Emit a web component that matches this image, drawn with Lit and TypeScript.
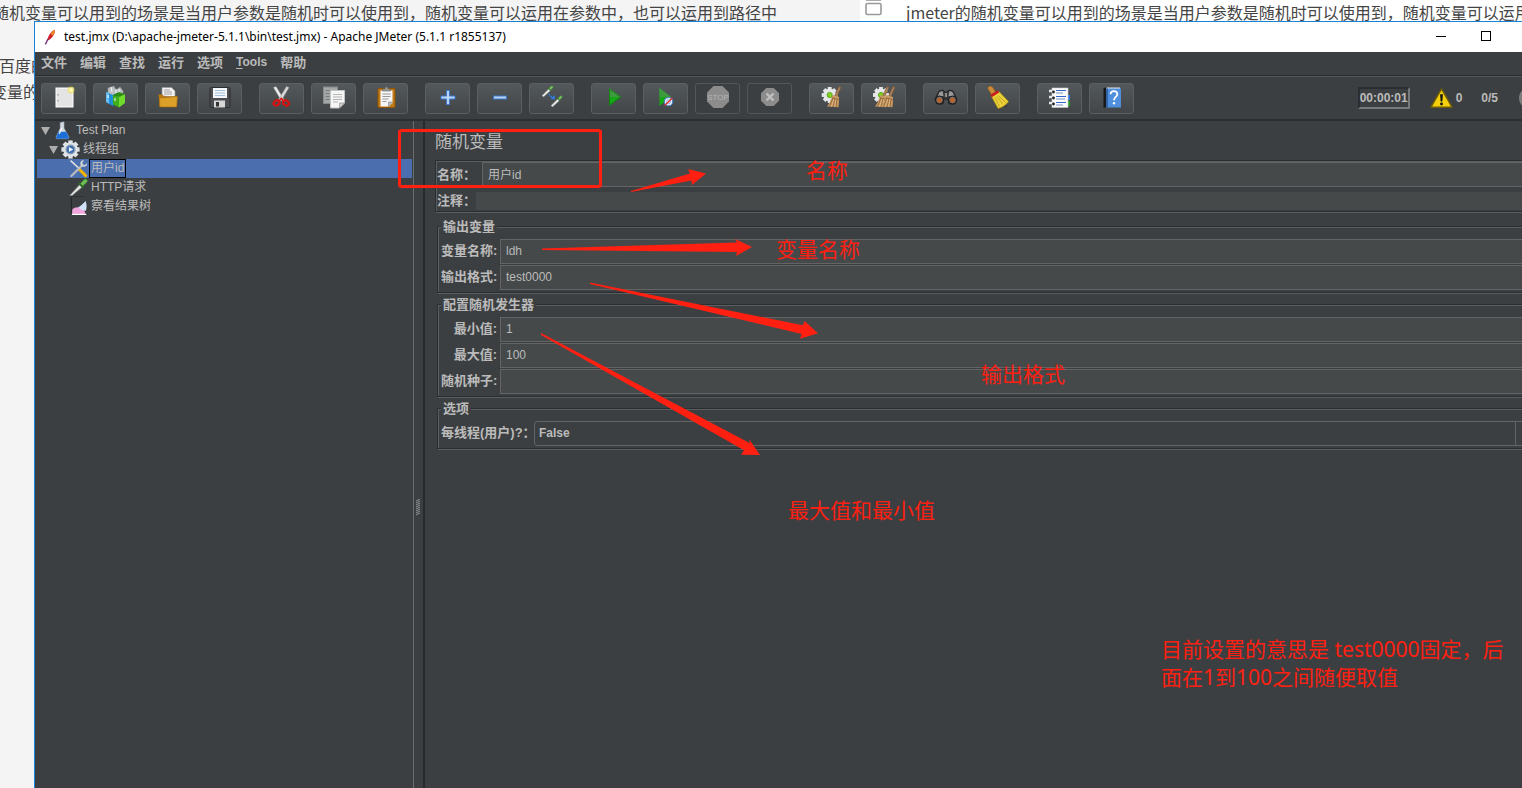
import { LitElement, html, svg, css } from "lit";
import { customElement, property, state } from "lit/decorators.js";
import { classMap } from "lit/directives/class-map.js";

const gear = (cx: number, cy: number, r: number, fill: string) => svg`
  <g fill=${fill}>
    <circle cx=${cx} cy=${cy} r=${r * 0.8}></circle>
    ${[0, 45, 90, 135].map(
      (a) => svg`<rect x=${cx - r * 0.24} y=${cy - r} width=${r * 0.48} height=${r * 2}
        transform=${`rotate(${a} ${cx} ${cy})`}></rect>`
    )}
  </g>`;

const broom = (dx: number) => svg`
  <g transform=${`translate(${dx} 0)`}>
    <path d="M19 0.5l2 0.8-4 9.2-2.4-0.8z" fill="#a98058" stroke="#7a5636" stroke-width=".5"></path>
    <path d="M12.5 9l6.5 2c0 4 0 7-0.6 10.2L7 20.500c2.500-3 4-7 5.500-11.500z" fill="#c79a62"></path>
    <path d="M13 12l-3.500 8.500M15 12l-2 9M17 12.500l-1 8.500M11.800 11.800l7 2" stroke="#8a5e34" stroke-width=".8" fill="none"></path>
    <path d="M14 13l-2.500 7.500M16 13l-1.500 8" stroke="#e9c694" stroke-width=".6" fill="none"></path>
  </g>`;

const pipette = (t: string) => svg`
  <g transform=${t}>
    <path d="M1 12L9 4l1.800 1.800L3 13z" fill="#eef0ee" stroke="#8d938d" stroke-width=".6"></path>
    <path d="M7.800 3.200l3 3" stroke="#2d6b22" stroke-width="1.200"></path>
    <path d="M9 3.600L11.500 1c1-.8 2.600.5 1.800 1.800L10.800 5.500z" fill="#7cc465" stroke="#3f8a30" stroke-width=".6"></path>
  </g>`;

const pics: Record<string, unknown> = {
  new: svg`
    <rect x="4" y="2" width="17" height="19" fill="#e4e4e4" stroke="#fff"></rect>
    <path d="M6 8v1.500M6 14v1.500" stroke="#888"></path>
    <circle cx="19" cy="4" r="3.500" fill="#f2e24a" opacity=".6"></circle>
    <circle cx="19" cy="4" r="1.800" fill="#fffbb8"></circle>`,
  templates: svg`
    <path d="M4 2l6-2 2 4 4-3 3 4v4l-8 4-7-4z" fill="#b9bfc2" stroke="#8a9194" stroke-width=".6"></path>
    <path d="M7 1l1 5M12 3l0 5M15 3l0 5" stroke="#f4f4f4"></path>
    <path d="M2 6l7 3v11l-7-4z" fill="#1f8fd8"></path><path d="M2 6l3 1.200v10.500L2 16z" fill="#63bdf2"></path>
    <path d="M9 9l4-2v11l-4 2z" fill="#1266a3"></path>
    <path d="M9 9l6 2v10.500l-6-3z" fill="#3fae1b"></path><path d="M15 11l6-3v9l-6 4.500z" fill="#6fdc2c"></path>
    <path d="M9 9l6-3 6 2-6 3z" fill="#2c8d10"></path>
    <path d="M4 9v3M11 12v3" stroke="#fff"></path>`,
  open: svg`
    <path d="M6 10V1.500h9.500L19 5v6z" fill="#f2f2f2" stroke="#999" stroke-width=".7"></path>
    <path d="M8 4h6M8 6h8M8 8h8" stroke="#999" stroke-width=".9"></path>
    <path d="M2.500 8.500h4l1.500 2h13v10.500H3.500z" fill="#b9790c"></path>
    <path d="M3.500 12l18-1.500-1 10.500H3.800z" fill="#dc9f28" stroke="#a86a06" stroke-width=".6"></path>`,
  save: svg`
    <rect x="2" y="1.500" width="20" height="20" rx="1.500" fill="#4b4d50" stroke="#2b2c2e"></rect>
    <rect x="5" y="2" width="14" height="10" fill="#f3f7fb"></rect>
    <path d="M7 4.500h10M7 7h10M7 9.500h10" stroke="#9db9d2" stroke-width=".9"></path>
    <rect x="6" y="14.500" width="11" height="7" fill="#d5d7d8"></rect>
    <rect x="8" y="16" width="3" height="4.500" fill="#333"></rect>`,
  cut: svg`
    <path d="M3.500 1.500l2.500-1 8 13-2.500 1.500z" fill="#eee" stroke="#999" stroke-width=".5"></path>
    <path d="M19 1.500l-2.500-1-8 13 2.500 1.500z" fill="#d8d8d8" stroke="#999" stroke-width=".5"></path>
    <ellipse cx="6.500" cy="17" rx="3" ry="2.400" fill="none" stroke="#d61212" stroke-width="2.200" transform="rotate(-35 6.500 17)"></ellipse>
    <ellipse cx="16" cy="17" rx="3" ry="2.400" fill="none" stroke="#d61212" stroke-width="2.200" transform="rotate(35 16 17)"></ellipse>
    <path d="M9 15l2.300-2.500 2.300 2.500" stroke="#d61212" stroke-width="1.800" fill="none"></path>`,
  copy: svg`
    <rect x="1.500" y="1" width="14" height="16.500" fill="#a4a7a8" stroke="#868a8b"></rect>
    <path d="M3.500 4.500h9M3.500 7.500h4M3.500 10.500h4M3.500 13.500h4" stroke="#7a7d7e"></path>
    <path d="M8.500 4.500h14V17l-5 5h-9z" fill="#f5f5f5" stroke="#c4c4c4"></path>
    <path d="M22.500 17h-5v5z" fill="#cfcfcf" stroke="#888" stroke-width=".6"></path>
    <path d="M11 8.500h9M11 11h9M11 13.500h9M11 16h5" stroke="#b5b5b5"></path>`,
  paste: svg`
    <rect x="4" y="2.500" width="17" height="19" rx="1" fill="#c17a14" stroke="#8f5505"></rect>
    <path d="M6.500 4.500h12V17l-3.500 3.500H6.500z" fill="#f5f5f5"></path>
    <path d="M18.500 16h-4v4.500z" fill="#bbb" stroke="#888" stroke-width=".6"></path>
    <path d="M8.500 8h8M8.500 10.500h8M8.500 13h6M8.500 15.500h4" stroke="#999"></path>
    <path d="M8.500 5V3h2.500l.5-2h2l.5 2h2.500v2z" fill="#9a9c98" stroke="#666" stroke-width=".6"></path>`,
  plus: svg`<path d="M10.500 4.500h3v5.500h5.500v3h-5.500v5.500h-3v-5.500H5v-3h5.500z" fill="#b9d5f5" stroke="#3b78c9"></path>`,
  minus: svg`<rect x="5.500" y="10" width="13" height="3" fill="#b9d5f5" stroke="#3b78c9"></rect>`,
  toggle: svg`
    ${pipette("translate(1 -1) scale(.9)")}${pipette("translate(10 9) scale(.9)")}
    <path d="M8.500 8l4 4" stroke="#2f7be0" stroke-width="1.600" stroke-dasharray="1.800 .8"></path>
    <path d="M15 13.500l-4.500-.5 4-4z" fill="#2f7be0"></path>`,
  play: svg`
    <path d="M7 2l12 9-12 9z" fill="#14a814"></path><path d="M7 2l12 9H7z" fill="#3f9a3f"></path>
    <path d="M7.500 3l11 8-11 8z" fill="none" stroke="#0c7a0c" stroke-width=".8"></path>`,
  playnow: svg`
    <path d="M5.500 2l11.500 9-11.500 9z" fill="#14a814"></path><path d="M5.500 2L17 11H5.500z" fill="#3f9a3f"></path>
    <circle cx="14.500" cy="15.700" r="4.200" fill="#e9f0fa" stroke="#4a7fc4" stroke-width="1.200"></circle>
    <circle cx="14.500" cy="15.700" r="2" fill="none" stroke="#7aa2d8" stroke-width=".8"></circle>
    <path d="M10.800 19.500l7.500-7.500" stroke="#d33" stroke-width="1.500"></path>`,
  stop: svg`
    <path d="M7.500 0h9L23 6.500v9L16.500 22h-9L1 15.500v-9z" fill="#8c8c8c"></path>
    <text x="12" y="14" text-anchor="middle" font-size="8" font-family="Liberation Sans" fill="#b4b4b4">STOP</text>`,
  shutdown: svg`
    <path d="M8.300 2h7.400L21 7.300v7.400L15.700 20H8.300L3 14.700V7.300z" fill="#8c8c8c"></path>
    <path d="M8.500 7.500l7 7M15.500 7.500l-7 7" stroke="#c0c0c0" stroke-width="2.400"></path>`,
  clear: svg`${gear(9.700, 9, 8, "#e4e6e7")}
    <circle cx="9.700" cy="9" r="2.600" fill="#7ed321" stroke="#4f9a10" stroke-width=".8"></circle>${broom(0)}`,
  clearall: svg`${gear(9, 9, 8, "#e4e6e7")}
    <circle cx="9" cy="9" r="2.600" fill="#7ed321" stroke="#4f9a10" stroke-width=".8"></circle>${broom(-4)}${broom(2)}`,
  search: svg`
    <path d="M5 5l4-1 2 2h2l2-2 4 1 4 8-2 5h-6l-1-5h-4l-1 5H3l-2-5z" fill="#3a3a3a" stroke="#141414" stroke-width=".7"></path>
    <path d="M5.500 6l3-1 1 5-6 1zM18.500 6l-3-1-1 5 6 1z" fill="#9a9a9a"></path>
    <path d="M11 7h2v4h-2z" fill="#8c8c8c"></path>
    <circle cx="5.500" cy="14" r="4" fill="#6a6a6a" stroke="#161616"></circle><circle cx="5.500" cy="14.300" r="2.500" fill="#b8622c"></circle>
    <circle cx="18.500" cy="14" r="4" fill="#6a6a6a" stroke="#161616"></circle><circle cx="18.500" cy="14.300" r="2.500" fill="#b8622c"></circle>`,
  sweep: svg`
    <ellipse cx="16" cy="20" rx="6" ry="1.500" fill="#2e3133" opacity=".6"></ellipse>
    <path d="M2 1c1.500-1.500 4-1 5 .5l2.800 4.500-4.300 2.800L2.500 4C1.800 3 1.500 1.800 2 1z" fill="#c98a3c" stroke="#80511a" stroke-width=".7"></path>
    <path d="M5.500 10.500l7.500-5 9.500 10c-2.500 3.500-6 6-10.500 7z" fill="#ecd23a" stroke="#a88a10" stroke-width=".7"></path>
    <path d="M9 11.500l4.500 9M11 10.500l6 8M12.500 9.500l7.500 7.500" stroke="#b89a16" stroke-width=".8"></path>
    <path d="M5 10.200L12.500 5.300" stroke="#c81e1e" stroke-width="2.600"></path>`,
  notebook: svg`
    <rect x="18" y="9" width="4" height="5" fill="#2b78e4"></rect><rect x="18" y="15" width="4" height="5" fill="#1f9e1f"></rect>
    <rect x="4" y="2" width="16" height="19.500" fill="#fbfbfb" stroke="#c9c9c9" stroke-width=".6"></rect>
    <path d="M8 4.500h10M8 10.500h10M8 16.500h10" stroke="#2f66c8" stroke-width="1.200"></path>
    <path d="M8 7h7M8 13h9M8 19h7" stroke="#6b86b8" stroke-width=".9"></path>
    ${[5, 11, 17].map((y) => svg`<path d=${`M1 ${y}h4`} stroke="#e8e8e8" stroke-width="2.500"></path><circle cx="5.500" cy=${y + 1} r="1.400" fill="#222"></circle>`)}`,
  help: svg`
    <path d="M3.500 2.500l3-1.500v20l-3 1z" fill="#17191b"></path>
    <path d="M6.500 1.500H20v1.500H6.500z" fill="#e8e8e8"></path>
    <rect x="6.500" y="2.500" width="14.500" height="19" fill="#4f8fdd"></rect><path d="M6.500 2.500h1.500v19H6.500z" fill="#2d65b0"></path>
    <path d="M10.500 8.200c.2-4.200 7-4.200 6.800 0 0 2.600-3.300 2.900-3.300 6" fill="none" stroke="#fff" stroke-width="1.800"></path>
    <circle cx="14" cy="17.300" r="1.200" fill="#fff"></circle>`,
  warn: svg`
    <path d="M12 2L23 21H1z" fill="#f5cf0c" stroke="#6e5c05" stroke-width="1.500" stroke-linejoin="round"></path>
    <path d="M10.500 7.500h3l-.6 7.500h-1.800z" fill="#151515"></path><circle cx="12" cy="17.800" r="1.500" fill="#151515"></circle>`,
  feather: svg`
    <path d="M19 1c2 4-3 12-9 16l-2-1c1-6 6-13 11-15z" fill="#d0222e"></path>
    <path d="M19 1c1.200 2.500-.5 6-3 9l-3-3c2-3 4-5 6-6z" fill="#f08a24"></path>
    <path d="M9 15l-4 8" stroke="#7a2a7c" stroke-width="2"></path>`,
  flask: svg`
    <path d="M9 2l5-1v8l6 11c.5 1.500 0 2.500-1.500 2.500h-13C4 22.500 3.500 21.500 4 20L9 9z" fill="#d3dbe3" stroke="#8b98a5" stroke-width=".7"></path>
    <path d="M7 13.500h9.500l3.500 7c.3 1.300-.2 2-1.500 2h-13c-1.300 0-1.800-.7-1.500-2z" fill="#1c6fd6"></path>
    <path d="M11 9l-3 7" stroke="#fff" stroke-width="1.500"></path>`,
  threads: svg`${gear(12, 12, 11.500, "#dfe3e7")}
    <circle cx="12" cy="12" r="5.600" fill="#3e6fb0" stroke="#8fa0b3" stroke-width="1.600"></circle>
    <path d="M10 8.800l5.500 3.200-5.500 3.200z" fill="#e9f2ff"></path>`,
  tools: svg`
    <path d="M2 2l11 10" stroke="#e2e2e2" stroke-width="2"></path>
    <path d="M13 13l8 8" stroke="#f0b400" stroke-width="3.800" stroke-linecap="round"></path>
    <path d="M3 21.500L16 8.500" stroke="#b9bcbf" stroke-width="2.800" stroke-linecap="round"></path>
    <path d="M19 1.500c-3-.5-5.500 2-4.500 5.500 1 3 5 4 7.500 1.500.8-.8 1-2 .8-3L20 7.500l-2.500-.6-.5-2.500z" fill="#cfd2d4"></path>`,
  sampler: svg`
    <path d="M1 22L14 8l3 3L4 22z" fill="#e3e6e4" stroke="#8d938d" stroke-width=".9"></path>
    <path d="M12 6.500l6 6" stroke="#2d6b22" stroke-width="2"></path>
    <path d="M14.500 7L19.500 1.500c2-1 4.500 1.200 3.500 3.200L17.500 10z" fill="#6fbf58" stroke="#3f8a30"></path>
    <path d="M1 23.500h18" stroke="#2a2c2e"></path>`,
  results: svg`
    <path d="M3 1v21h20" fill="none" stroke="#23262a" stroke-width="1.500"></path>
    <path d="M4 22v-6c2-2 4-3 7-3 4 0 9 3 10 9z" fill="#f0a6dc"></path>
    <path d="M12 13c4-3 6-5 9-8 1.500 4 1.500 8 .5 12-4 1-7-1-9.500-4z" fill="#d3e2fb"></path>
    <path d="M3.500 22h18.500" stroke="#fff" stroke-width="1.500"></path>`,
};

@customElement("jm-icon")
class JmIcon extends LitElement {
  @property() name = "";
  @property({ type: Number }) size = 24;
  static styles = css`
    :host { display: block; flex: none; line-height: 0; }
  `;
  render() {
    return html`<svg width=${this.size} height=${this.size} viewBox="0 0 24 24" aria-hidden="true">${pics[this.name]}</svg>`;
  }
}

@customElement("jm-toolbar")
class JmToolbar extends LitElement {
  private groups = [
    [["new", "新建"], ["templates", "模板"], ["open", "打开"], ["save", "保存"]],
    [["cut", "剪切"], ["copy", "复制"], ["paste", "粘贴"]],
    [["plus", "展开"], ["minus", "收起"], ["toggle", "切换"]],
    [["play", "启动"], ["playnow", "不停顿开始"], ["stop", "停止"], ["shutdown", "关闭"]],
    [["clear", "清除"], ["clearall", "清除全部"]],
    [["search", "搜索"], ["sweep", "重置搜索"]],
    [["notebook", "函数助手"], ["help", "帮助"]],
  ];
  static styles = css`
    :host { display: flex; align-items: center; height: 42px; padding-left: 6px; color: #bbb;
      font: bold 12px/16px "Liberation Sans", Arial, sans-serif; }
    .groups { display: flex; gap: 17px; }
    .group { display: flex; gap: 7px; }
    button { width: 45px; height: 31px; padding: 0; display: flex; align-items: center; justify-content: center;
      border: 1px solid #5b5f61; border-radius: 3px; background: linear-gradient(#53585a, #424648); }
    button:disabled { background: none; border-color: #53575a; }
    .status { margin-left: auto; display: flex; align-items: center; padding-right: 12px; }
    .timer { border: 2px solid; border-color: #2b2e30 #77797b #77797b #2b2e30; padding: 1px 0; width: 48px; text-align: center; margin-right: 20px; }
    .errors { display: flex; align-items: center; gap: 3px; margin-right: 19px; }
    .lamp { width: 22px; height: 22px; margin-left: 21px; border-radius: 50%; background: radial-gradient(#999, #777 60%, #b5b5b5); }
  `;
  render() {
    return html`
      <div class="groups">
        ${this.groups.map((g) => html`<div class="group">
          ${g.map(([icon, label]) => html`<button aria-label=${label} ?disabled=${icon === "stop" || icon === "shutdown"}>
            <jm-icon name=${icon}></jm-icon></button>`)}
        </div>`)}
      </div>
      <div class="status">
        <span class="timer">00:00:01</span>
        <span class="errors"><jm-icon name="warn" size="23"></jm-icon>0</span>
        <span>0/5</span>
        <span class="lamp"></span>
      </div>`;
  }
}

@customElement("jm-tree")
class JmTree extends LitElement {
  @state() private selected = "用户id";
  private nodes = [
    { depth: 0, icon: "flask", label: "Test Plan", open: true },
    { depth: 1, icon: "threads", label: "线程组", open: true },
    { depth: 2, icon: "tools", label: "用户id", open: false },
    { depth: 2, icon: "sampler", label: "HTTP请求", open: false },
    { depth: 2, icon: "results", label: "察看结果树", open: false },
  ];
  static styles = css`
    :host { display: block; color: #bbb; font: 12px/17px "Liberation Sans", "Noto Sans CJK SC", sans-serif; }
    ul { list-style: none; margin: 0; padding: 0; }
    li { height: 19px; display: flex; align-items: center; cursor: default; }
    .d0 { padding-left: 3px; }
    .d1 { padding-left: 11px; }
    .d2 { padding-left: 32px; }
    .arrow { width: 11px; height: 8px; flex: none; margin-right: 2px; }
    .label { border: 1px solid transparent; padding: 0 1px; margin-left: 1px; white-space: nowrap; }
    .d0 .label { margin-left: 2px; }
    .selected { background: #4b6eaf; }
    .selected .label { border-color: #000; }
  `;
  render() {
    return html`<ul role="tree" aria-label="测试计划">
      ${this.nodes.map((n) => html`
        <li role="treeitem" aria-selected=${n.label === this.selected}
          class=${classMap({ [`d${n.depth}`]: true, selected: n.label === this.selected })}
          @click=${() => (this.selected = n.label)}>
          ${n.open ? html`<svg class="arrow" viewBox="0 0 11 8"><path d="M1 0h9l-4.500 8z" fill="#adadad"></path></svg>` : null}
          <jm-icon name=${n.icon} size="19"></jm-icon>
          <span class="label">${n.label}</span>
        </li>`)}
    </ul>`;
  }
}

@customElement("jm-form")
class JmForm extends LitElement {
  static styles = css`
    :host { display: block; padding: 0 8px 0 10px; color: #bbb;
      font: bold 13px/16px "Liberation Sans", "Noto Sans CJK SC", sans-serif; }
    h1 { margin: 0; height: 39px; padding-top: 10px; box-sizing: border-box; font-size: 17px; line-height: 24px; font-weight: normal; }
    .box, fieldset { border: 1px solid #2b2e30; box-shadow: inset 1px 1px #5b5e60, 1px 1px #5b5e60; }
    .box { display: grid; gap: 5px; padding: 1px; margin-bottom: 7px; }
    .line { display: flex; align-items: center; }
    .line label { width: 39px; flex: none; white-space: nowrap; }
    .named label { width: 45px; }
    input, select { box-sizing: border-box; width: 100%; min-width: 0; height: 25px; margin: 0; padding: 0 5px 2px; border: 1px solid #646464;
      border-radius: 0; background: #45494a; color: #bbb; outline: none;
      font: 12px/16px "Liberation Sans", "Noto Sans CJK SC", sans-serif; }
    .plain { border: 0; height: 18px; }
    fieldset { margin: 0 0 4px 2px; padding: 5px 2px 2px 3px; min-width: 0; }
    legend { padding: 0 2px; margin-left: 0; line-height: 15px; background: #3c3f41; }
    .grid { display: grid; grid-template-columns: 56px 1fr; gap: 1px 3px; align-items: center; }
    .grid label { text-align: right; white-space: nowrap; padding-bottom: 2px; }
    .wide { grid-template-columns: 90px 1fr; }
    .wide label { text-align: left; }
    .combo { display: flex; border: 1px solid #646464; border-radius: 3px; }
    .combo select { appearance: none; border: 0; height: 23px; flex: 1; padding: 0 4px 2px; background: transparent; font-weight: bold; }
    .combo svg { flex: none; border-left: 1px solid #646464; }
  `;
  render() {
    return html`
      <h1>随机变量</h1>
      <div class="box">
        <div class="line named"><label for="name">名称：</label><input id="name" .value=${"用户id"} /></div>
        <div class="line"><label for="comment">注释：</label><input id="comment" class="plain" /></div>
      </div>
      <fieldset>
        <legend>输出变量</legend>
        <div class="grid">
          <label for="var">变量名称:</label><input id="var" .value=${"ldh"} />
          <label for="fmt">输出格式:</label><input id="fmt" .value=${"test0000"} />
        </div>
      </fieldset>
      <fieldset>
        <legend>配置随机发生器</legend>
        <div class="grid">
          <label for="min">最小值:</label><input id="min" .value=${"1"} />
          <label for="max">最大值:</label><input id="max" .value=${"100"} />
          <label for="seed">随机种子:</label><input id="seed" />
        </div>
      </fieldset>
      <fieldset>
        <legend>选项</legend>
        <div class="grid wide">
          <label for="per">每线程(用户)?：</label>
          <div class="combo">
            <select id="per"><option>False</option><option>True</option></select>
            <svg width="25" height="23" viewBox="0 0 25 23" aria-hidden="true"><path d="M6 9h10l-5 6z" fill="#9a9a9a"></path></svg>
          </div>
        </div>
      </fieldset>`;
  }
}

@customElement("app-root")
class AppRoot extends LitElement {
  private menus = ["文件", "编辑", "查找", "运行", "选项", "Tools", "帮助"];
  static styles = css`
    :host { display: block; position: relative; height: 100vh; overflow: hidden; background: #fff; }
    .page { display: grid; grid-template-columns: 860px 1fr; height: 100%; color: #444;
      font: 16px/26px "Noto Sans CJK SC", sans-serif; white-space: nowrap; }
    p { margin: 0; }
    .source { background: #f4f4f4; overflow: hidden; }
    .first { margin-left: -7px; line-height: 24px; }
    .second { margin: 28px 0 0 -1px; }
    .third { margin-left: -9px; }
    .preview { display: flex; align-items: flex-start; gap: 24px; padding-left: 5px; overflow: hidden; line-height: 24px; }
    .preview svg { flex: none; }
    .window { position: absolute; left: 34px; top: 21px; right: -31px; bottom: -105px; display: flex; flex-direction: column;
      border-left: 1px solid #1883d7; border-top: 1px solid #1883d7; background: #3c3f41; }
    .title { display: flex; align-items: center; height: 30px; flex: none; background: #fff; color: #000; padding-left: 7px;
      font: 12px/16px "Noto Sans", "Open Sans", sans-serif; }
    .title span { margin-left: 6px; white-space: nowrap; }
    .controls { margin-left: auto; display: flex; }
    .controls button { width: 45px; height: 30px; padding: 0 0 2px; border: 0; background: none; display: grid; place-items: center; }
    .menu { display: flex; gap: 13px; height: 23px; box-sizing: content-box; flex: none; align-items: flex-start; padding-left: 6px; color: #bbb;
      border-bottom: 1px solid #282b2d; font: bold 13px/21px "Liberation Sans", "Noto Sans CJK SC", sans-serif; }
    .menu button { padding: 0; border: 0; background: none; color: inherit; font: inherit; }
    .menu .latin { font-size: 12px; }
    .latin u { text-underline-offset: 2px; }
    jm-toolbar { flex: none; border-top: 1px solid #55585a; border-bottom: 2px solid #2c2f31; }
    .main { flex: 1; display: flex; min-height: 0; }
    jm-tree { width: 375px; flex: none; margin: 0 1px 0 2px; }
    .split { width: 9px; flex: none; border-left: 1px solid #6b6e70; border-right: 2px solid #282b2d; display: grid; place-items: center; }
    jm-form { flex: 1; min-width: 0; }
    .notes { position: absolute; inset: 0; pointer-events: none; color: #ff2012; white-space: nowrap;
      font: 21px/28px "Noto Sans", "Noto Sans CJK SC", sans-serif; }
    .arrows { position: absolute; left: 0; top: 0; }
    .notes p { position: absolute; }
    .n1 { left: 806px; top: 156px; }
    .n2 { left: 776px; top: 235px; }
    .n3 { left: 981px; top: 360px; }
    .n4 { left: 788px; top: 496px; }
    .n5 { left: 1161px; top: 635px; }
  `;
  render() {
    return html`
      <div class="page">
        <div class="source">
          <p class="first">随机变量可以用到的场景是当用户参数是随机时可以使用到，随机变量可以运用在参数中，也可以运用到路径中</p>
          <p class="second">百度的</p>
          <p class="third">变量的</p>
        </div>
        <div class="preview">
          <svg width="17" height="17" viewBox="0 0 17 17" aria-hidden="true">
            <path d="M1 .5h15" stroke="#aaa"></path>
            <rect x="1" y="3.500" width="15" height="11" rx="1.500" fill="#fff" stroke="#999" stroke-width="1.600"></rect>
          </svg>
          <p>jmeter的随机变量可以用到的场景是当用户参数是随机时可以使用到，随机变量可以运用</p>
        </div>
      </div>
      <div class="window">
        <div class="title">
          <jm-icon name="feather" size="16"></jm-icon>
          <span>test.jmx (D:\\apache-jmeter-5.1.1\\bin\\test.jmx) - Apache JMeter (5.1.1 r1855137)</span>
          <div class="controls">
            <button aria-label="最小化"><svg width="10" height="10"><path d="M0 5.500h10" stroke="#000"></path></svg></button>
            <button aria-label="最大化"><svg width="10" height="10"><rect x=".5" y=".5" width="9" height="9" fill="none" stroke="#000"></rect></svg></button>
            <button aria-label="关闭"><svg width="10" height="10"><path d="M0 0l10 10M10 0L0 10" stroke="#000"></path></svg></button>
          </div>
        </div>
        <nav class="menu">
          ${this.menus.map((m) => m === "Tools"
            ? html`<button class="latin"><u>T</u>ools</button>`
            : html`<button>${m}</button>`)}
        </nav>
        <jm-toolbar></jm-toolbar>
        <div class="main">
          <jm-tree></jm-tree>
          <div class="split">
            <svg width="5" height="17" aria-hidden="true">
              ${[0, 2, 4, 6, 8, 10, 12, 14].map((y) => svg`<path d=${`M0 ${y + 2}l4-2`} stroke="#a5a7a8" stroke-width=".8"></path>`)}
            </svg>
          </div>
          <jm-form></jm-form>
        </div>
      </div>
      <div class="notes">
        <svg class="arrows" width="900" height="480" viewBox="0 0 900 480" aria-hidden="true">
          <rect x="399.500" y="130.500" width="201" height="56" rx="2" fill="none" stroke="#ff2012" stroke-width="3"></rect>
          <g fill="#ff2012">
            <path d="M631 191L690 173.500 688 169 706 173.500 692 185 691.500 180.500 631 192z"></path>
            <path d="M542 248.500L737 242.500 735 239 752 247 736 256 737 252 542 250z"></path>
            <path d="M590 282.500L803 325.300 804.500 321 818 333.300 800 338.700 801.700 334 590 284z"></path>
            <path d="M541 333L750 443.300 749 439 760 455 741 454.700 744 450.300 541 335z"></path>
          </g>
        </svg>
        <p class="n1">名称</p>
        <p class="n2">变量名称</p>
        <p class="n3">输出格式</p>
        <p class="n4">最大值和最小值</p>
        <p class="n5">目前设置的意思是 test0000固定，后<br />面在1到100之间随便取值</p>
      </div>`;
  }
}
